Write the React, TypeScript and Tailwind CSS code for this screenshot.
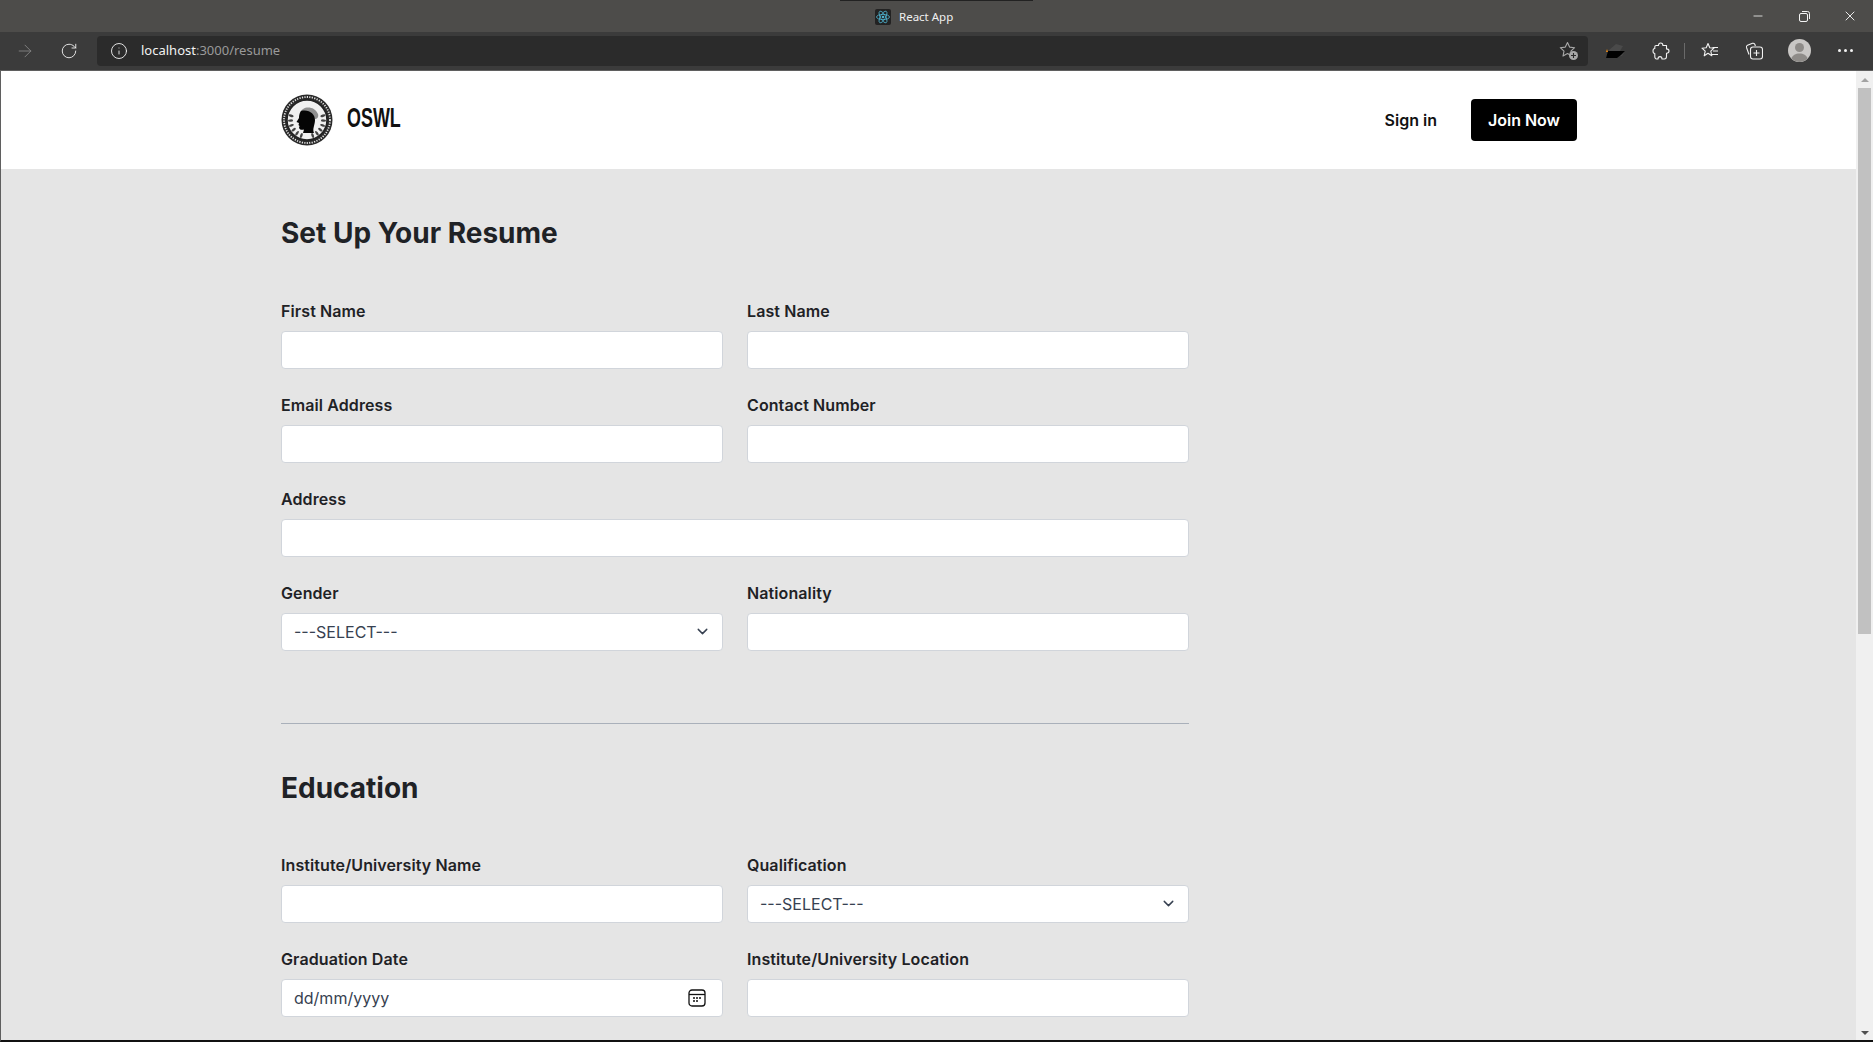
import { ChevronDown, ArrowRight, RotateCw, Info, Minus, X } from 'lucide-react';

// Browser window chrome icons
const StarPlus = () => (
  <svg width="20" height="20" viewBox="0 0 20 20" fill="none" stroke="#a8a8a8" strokeWidth="1.1">
    <path d="M8.5 1.5l2.1 4.6 5 .6-3.7 3.4 1 5-4.4-2.5L4 15.100l1-5L1.300 6.700l5-.6z" strokeLinejoin="round" />
    <circle cx="14.500" cy="14.500" r="4.500" fill="#a8a8a8" stroke="none" />
    <path d="M14.500 12v5M12 14.500h5" stroke="#2b2b2b" />
  </svg>
);

const Puzzle = () => (
  <svg width="18" height="18" viewBox="0 0 18 18" fill="none" stroke="#f2f2f2" strokeWidth="1.1" strokeLinejoin="round">
    <path d="M6.500 3.500C6.500 2 7.500 1 8.700 1s2.200 1 2.200 2.500h3.600v3.400C16 6.900 17 7.900 17 9s-1 2.200-2.500 2.200v3.300c0 1.500-1 2.500-2.200 2.500H10c0-1.500-.8-2.400-2-2.400S6 15.500 6 17H4.500c-1 0-1.700-1-1.700-2.500v-3C1.800 11.500 1 10.300 1 9s.8-2.500 1.800-2.500V4.800c0-.8.700-1.300 1.400-1.300z" />
  </svg>
);

const StarList = () => (
  <svg width="18" height="18" viewBox="0 0 18 18" fill="none" stroke="#f2f2f2" strokeWidth="1.1">
    <path d="M7 1.500l1.800 4.300 4.200.4-3.200 2.900 1 4.700L7 11.300l-3.800 2.500 1-4.700L1 6.200l4.200-.4z" strokeLinejoin="round" />
    <path d="M11.500 5.500H17M12 9h5M10.500 12.500H17" />
  </svg>
);

const Collections = () => (
  <svg width="18" height="18" viewBox="0 0 18 18" fill="none" stroke="#f2f2f2" strokeWidth="1.1" strokeLinejoin="round">
    <path d="M4 12.500L1.500 5.500c-.3-1 .1-1.800 1-2.200l5-2c1-.3 1.800.1 2.300 1l.6 1.700" />
    <rect x="5.500" y="5" width="12" height="12" rx="2.500" fill="#3b3b3b" />
    <path d="M11.500 8v6M8.500 11h6" />
  </svg>
);

const Avatar = () => (
  <svg width="23" height="23" viewBox="0 0 23 23">
    <circle cx="11.500" cy="11.500" r="11.500" fill="#c9c7c5" />
    <circle cx="11.500" cy="8.500" r="4.500" fill="#8e8b88" />
    <path d="M3.500 19.500c1-3.500 4-5 8-5s7 1.500 8 5c-2 2.200-5 3.500-8 3.500s-6-1.300-8-3.500z" fill="#8e8b88" />
  </svg>
);

const ReactFavicon = () => (
  <svg width="16" height="16" viewBox="0 0 16 16" fill="none" stroke="#4fb3cf" strokeWidth="0.8">
    <rect width="16" height="16" rx="2" fill="#222" stroke="none" />
    <ellipse cx="8" cy="8" rx="6.500" ry="2.600" />
    <ellipse cx="8" cy="8" rx="6.500" ry="2.600" transform="rotate(60 8 8)" />
    <ellipse cx="8" cy="8" rx="6.500" ry="2.600" transform="rotate(120 8 8)" />
    <circle cx="8" cy="8" r="1.300" fill="#4fb3cf" stroke="none" />
  </svg>
);

// laurel leaves for the seal, one side at a time
const leafAngles = [75, 92, 109, 126, 143, 160];

// Seal logo next to the OSWL name
const Seal = () => (
  <svg width="52" height="52" viewBox="0 0 52 52">
    <circle cx="26" cy="26" r="25.500" fill="#2a2a2a" />
    <circle cx="26" cy="26" r="23" fill="none" stroke="#e6e6e6" strokeWidth="1.800" strokeDasharray="1.200 1.300" />
    <circle cx="26" cy="26" r="20" fill="#f0f0f0" stroke="#222" strokeWidth="1.500" />
    {leafAngles.map((a) => (
      <g key={a}>
        <ellipse cx="26" cy="9.500" rx="1.200" ry="2.600" fill="#444" transform={`rotate(${a} 26 26)`} />
        <ellipse cx="26" cy="9.500" rx="1.200" ry="2.600" fill="#444" transform={`rotate(${-a} 26 26)`} />
      </g>
    ))}
    <path d="M19 19C21 12 33 11 37 20c1 3-1 5-3 5-2-5-8-7-15-6z" fill="#8f8f8f" />
    <path d="M20 17c-2 3-2 5-2 7l-2.500 4 2.500 1-.5 2 1 1-.5 2c1 2 3 2 5 1.500L22 39h11c-2-4 1-8 1-13 0-6-6-11-14-9z" fill="#050505" />
  </svg>
);

const Label = ({ children }: { children: string }) => (
  <label className="block mb-2 text-[16px] leading-6 font-semibold tracking-[0.1px] text-[#1f2226]">{children}</label>
);

const inputClass =
  'block w-full h-[38px] px-3 bg-white border border-[#d1d5db] rounded text-[16px] text-[#374151] outline-none placeholder:text-[#374151]';

const TextField = ({ label, span }: { label: string; span?: boolean }) => (
  <div className={span ? 'col-span-2' : ''}>
    <Label>{label}</Label>
    <input type="text" className={inputClass} />
  </div>
);

const SelectField = ({ label }: { label: string }) => (
  <div>
    <Label>{label}</Label>
    <div className="relative">
      <select className={`${inputClass} appearance-none`} defaultValue="">
        <option value="">---SELECT---</option>
      </select>
      <ChevronDown size={17} strokeWidth={2} className="absolute right-[12px] top-[10px] text-[#374151]" />
    </div>
  </div>
);

const DateField = ({ label }: { label: string }) => (
  <div>
    <Label>{label}</Label>
    <div className="relative">
      <input type="text" placeholder="dd/mm/yyyy" className={inputClass} />
      <svg width="18" height="18" viewBox="0 0 18 18" fill="none" stroke="#111" strokeWidth="1.300" className="absolute right-[17px] top-[10px]">
        <rect x="1" y="1" width="16" height="16" rx="3" />
        <path d="M1 5.500h16" />
        <path d="M5 9h2M8 9h2M11 9h2M5 12h2M8 12h2" strokeWidth="1.600" />
      </svg>
    </div>
  </div>
);

export default function App() {
  return (
    <div className="h-screen flex flex-col overflow-hidden font-['Inter',sans-serif]">
      {/* Title bar */}
      <div className="h-[32px] shrink-0 bg-[#4d4c4a] flex items-center relative">
        <div className="flex-1" />
        <div className="w-[193px] h-full border-t border-[#222] flex items-center pl-[35px] gap-[8px] font-['Noto_Sans',sans-serif] text-[11.5px] text-[#f0f0f0]">
          <ReactFavicon />
          <span>React App</span>
        </div>
        <div className="flex-1 flex justify-end items-center text-[#f4f4f4]">
          <button className="w-[46px] flex justify-center"><Minus size={14} strokeWidth={1.4} /></button>
          <button className="w-[46px] flex justify-center">
            <svg width="11" height="11" viewBox="0 0 11 11" fill="none" stroke="#f4f4f4">
              <rect x="0.500" y="2.500" width="8" height="8" rx="1.500" />
              <path d="M3 .5h5.500a2 2 0 0 1 2 2V8" />
            </svg>
          </button>
          <button className="w-[46px] flex justify-center"><X size={16} strokeWidth={1.4} /></button>
        </div>
      </div>

      {/* Toolbar */}
      <div className="h-[39px] shrink-0 bg-[#3b3b3b] border-b border-[#5f5f5f] flex items-center pb-[1px]">
        <div className="w-[97px] shrink-0 flex items-center text-[#8a8a8a]">
          <span className="w-[50px] flex justify-center"><ArrowRight size={20} strokeWidth={1} /></span>
          <span className="w-[38px] flex justify-center text-[#f2f2f2]"><RotateCw size={18} strokeWidth={1.2} /></span>
        </div>
        <div className="w-[1491px] shrink-0 h-[30px] bg-[#2b2b2b] rounded flex items-center pl-[13px] pr-[9px] font-['Noto_Sans',sans-serif] text-[13px]">
          <Info size={18} strokeWidth={1.200} className="text-[#f2f2f2]" />
          <span className="ml-[13px] pt-[1px] text-[#f2f2f2]">localhost</span>
          <span className="pt-[1px] text-[#9a9a9a]">:3000/resume</span>
          <span className="ml-auto flex"><StarPlus /></span>
        </div>
        <div className="flex-1 flex items-center">
          <span className="w-[55px] flex justify-center">
            <svg width="20" height="16" viewBox="0 0 20 16">
              <path d="M3 7l7-6 7 2-3 5 5 0v0L16 13 0 15l2-6z" fill="#4a4a4a" />
              <path d="M2 8h14l3 0-4 4-4 3H0z" fill="#000" />
              <path d="M1 6l1 3-2 0z" fill="#ef8a12" />
            </svg>
          </span>
          <span className="w-[35px] flex justify-center"><Puzzle /></span>
          <span className="w-px h-[16px] ml-[6px] bg-[#6a6a6a]" />
          <span className="w-[49px] flex justify-center"><StarList /></span>
          <span className="w-[39px] flex justify-center"><Collections /></span>
          <span className="w-[52px] flex justify-center"><Avatar /></span>
          <span className="w-[41px] flex justify-center gap-[3px]">
            <i className="w-[3px] h-[3px] rounded-full bg-[#f2f2f2]" />
            <i className="w-[3px] h-[3px] rounded-full bg-[#f2f2f2]" />
            <i className="w-[3px] h-[3px] rounded-full bg-[#f2f2f2]" />
          </span>
        </div>
      </div>

      <div className="flex-1 min-h-0 flex border-l border-[#5f5f5f] border-b-2 border-b-[#111]">
        {/* Page */}
        <div className="flex-1 min-w-0 overflow-hidden bg-[#e5e5e5]">
          <header className="h-[98px] bg-white">
            <div className="w-[1296px] ml-[280px] h-full flex items-center justify-between">
              <div className="flex items-center gap-[14px]">
                <Seal />
                <span className="font-['Liberation_Sans',sans-serif] font-bold text-[28px] leading-none origin-left scale-x-[0.64] text-[#111] -mt-[5px]">OSWL</span>
              </div>
              <div className="flex items-center gap-[34px]">
                <a className="text-[16px] font-semibold text-[#111]">Sign in</a>
                <button className="w-[106px] h-[42px] bg-black text-white rounded text-[16px] font-semibold">Join Now</button>
              </div>
            </div>
          </header>

          <main className="w-[908px] ml-[280px] pt-[46px]">
            <h1 className="text-[28px] leading-9 font-bold text-[#1f2226] mb-12">Set Up Your Resume</h1>
            <div className="grid grid-cols-2 gap-x-6 gap-y-6">
              <TextField label="First Name" />
              <TextField label="Last Name" />
              <TextField label="Email Address" />
              <TextField label="Contact Number" />
              <TextField label="Address" span />
              <SelectField label="Gender" />
              <TextField label="Nationality" />
            </div>

            <hr className="mt-[72px] mb-[46px] border-0 border-t border-[#a9b0ba]" />

            <h2 className="text-[28px] leading-9 font-bold text-[#1f2226] mb-[47px]">Education</h2>
            <div className="grid grid-cols-2 gap-x-6 gap-y-6">
              <TextField label="Institute/University Name" />
              <SelectField label="Qualification" />
              <DateField label="Graduation Date" />
              <TextField label="Institute/University Location" />
            </div>
          </main>
        </div>

        {/* Scrollbar */}
        <div className="w-[17px] shrink-0 bg-[#f0f0f0] flex flex-col items-center">
          <div className="w-0 h-0 mt-[7px] border-x-[4px] border-x-transparent border-b-[4px] border-b-[#a3a3a3]" />
          <div className="w-[13px] h-[546px] mt-[6px] bg-[#c1c1c1]" />
          <div className="flex-1" />
          <div className="w-0 h-0 mb-[5px] border-x-[4px] border-x-transparent border-t-[4px] border-t-[#505050]" />
        </div>
      </div>
    </div>
  );
}
